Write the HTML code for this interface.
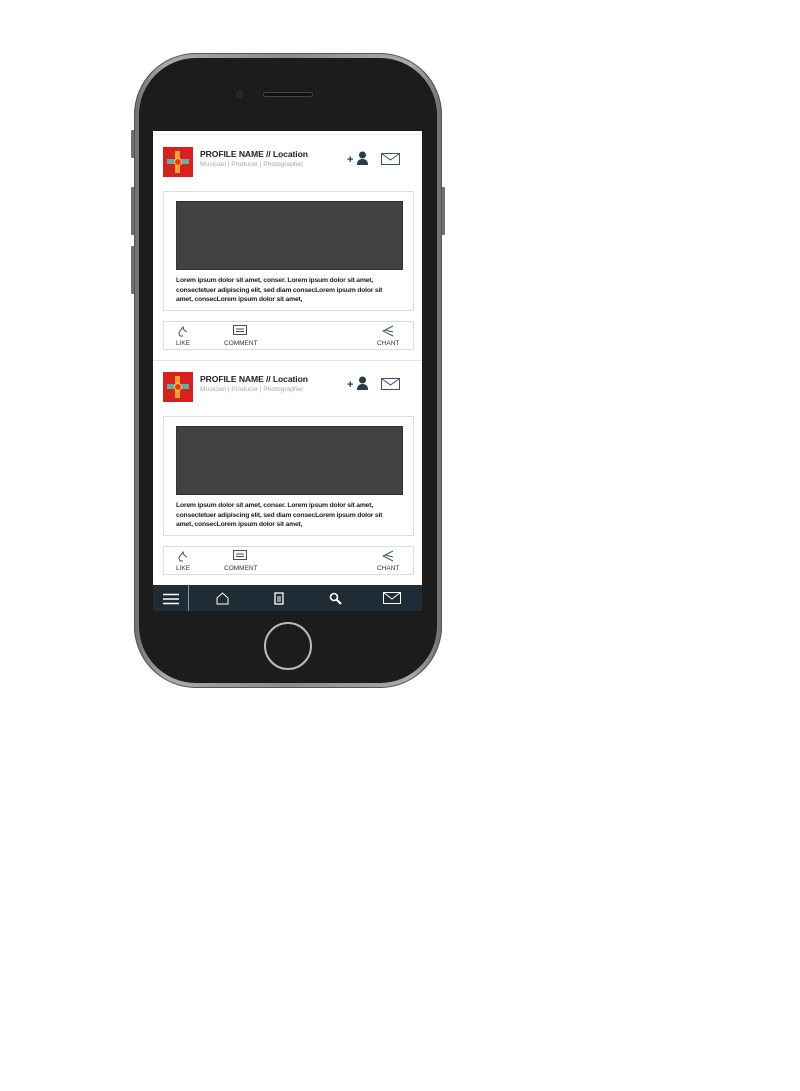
<!DOCTYPE html>
<html><head><style>
*{margin:0;padding:0;box-sizing:border-box}
body{width:800px;height:1091px;background:#fff;position:relative;font-family:"Liberation Sans",sans-serif;overflow:hidden}
.abs{position:absolute}
.phone{left:134px;top:53px;width:308px;height:635px;border-radius:62px;background:linear-gradient(90deg,#6d6e72,#a9aaae 10%,#8a8b8f 50%,#a9aaae 90%,#6d6e72);box-shadow:inset 0 0 0 1px #555}
.inner{left:139px;top:58px;width:298px;height:625px;border-radius:57px;background:#1c1c1c}
.screen{left:153px;top:131px;width:269px;height:480px;background:#fff;overflow:hidden}
.btn{background:#6f7074;width:4px;border-radius:1px}
.post{position:absolute;left:0;width:269px;height:225px}
.av{position:absolute;left:10px;top:16px;width:30px;height:30px;background:#d8201f}
.name{position:absolute;left:47px;top:18px;font-size:8.6px;font-weight:bold;color:#222;letter-spacing:-.1px}
.sub{position:absolute;left:47px;top:30px;font-size:6.8px;color:#aaa;letter-spacing:-.1px}
.card{position:absolute;left:10px;top:60px;width:251px;height:120px;border:1px solid #ddd}
.img{position:absolute;left:12px;top:9px;width:227px;height:69px;background:#424242;border:1px solid #333}
.txt{position:absolute;left:12px;top:84px;white-space:nowrap;font-size:6.8px;line-height:9.5px;color:#222;letter-spacing:-.2px;font-weight:bold;-webkit-text-stroke:0}
.act{position:absolute;left:10px;top:190px;width:251px;height:29px;border:1px solid #ddd;font-size:6.5px;color:#333}
.act span{position:absolute;top:18px}
.nav{position:absolute;left:0;top:454px;width:269px;height:26px;background:#1f2c35}
</style></head><body>
<div class="abs btn" style="left:131px;top:130px;height:28px"></div>
<div class="abs btn" style="left:131px;top:187px;height:48px"></div>
<div class="abs btn" style="left:131px;top:246px;height:48px"></div>
<div class="abs btn" style="left:441px;top:187px;height:48px"></div>
<div class="abs phone"></div>
<div class="abs inner"></div>
<div class="abs" style="left:236px;top:91px;width:7px;height:7px;border-radius:50%;background:#1a2238;border:1px solid #333"></div>
<div class="abs" style="left:263px;top:92px;width:50px;height:5px;border-radius:3px;background:#111;border:1px solid #444"></div>
<div class="abs" style="left:264px;top:622px;width:48px;height:48px;border-radius:50%;border:2px solid #bbb;background:#1c1c1c"></div>
<div class="abs screen">
 <div style="position:absolute;left:0;top:0;width:269px;height:4px;border-bottom:1px solid #eee"></div>
 <div class="post" style="top:0">
  <div class="av"><div style="position:absolute;left:12px;top:4px;width:5px;height:22px;background:#e8a040"></div><div style="position:absolute;left:4px;top:12px;width:22px;height:5px;background:#6aa"></div><div style="position:absolute;left:11px;top:11px;width:8px;height:8px;border-radius:50%;background:#e33;border:1px solid #fc0"></div></div>
  <div class="name">PROFILE NAME // Location</div>
  <div class="sub">Musician | Producer | Photographer</div>
  <div style="position:absolute;left:194px;top:23px;font-size:11px;font-weight:bold;color:#2a3a48">+</div>
  <svg style="position:absolute;left:203px;top:20px" width="13" height="15"><circle cx="6.5" cy="4" r="3.5" fill="#2a3a48"/><path d="M1 14 Q1 8 6.5 8 Q12 8 12 14Z" fill="#2a3a48"/></svg>
  <svg style="position:absolute;left:228px;top:22px" width="20" height="13"><rect x=".5" y=".5" width="18" height="11" fill="none" stroke="#3c5266"/><path d="M.5 .5 L9.5 7 L18.5 .5" fill="none" stroke="#3c5266"/></svg>
  <div class="card"><div class="img"></div><div class="txt">Lorem ipsum dolor sit amet, conser. Lorem ipsum dolor sit amet,<br>consectetuer adipiscing elit, sed diam consecLorem ipsum dolor sit<br>amet, consecLorem ipsum dolor sit amet,</div></div>
  <div class="act">
   <svg style="position:absolute;left:13px;top:2px" width="12" height="14"><path d="M3 12 Q1 9 3 7 L6 3 L7 6 L10 8 M3 12 L6 12" fill="none" stroke="#3c5266"/></svg>
   <svg style="position:absolute;left:69px;top:3px" width="14" height="12"><rect x=".5" y=".5" width="13" height="9" fill="none" stroke="#3c5266"/><path d="M3 4h8M3 6.5h8" stroke="#3c5266"/></svg>
   <svg style="position:absolute;left:218px;top:3px" width="12" height="12"><path d="M11 1 L1 6 L11 11 M3 5 L11 7" fill="none" stroke="#3c5266"/></svg>
   <span style="left:12px">LIKE</span><span style="left:60px">COMMENT</span><span style="left:213px">CHANT</span>
  </div>
  <div style="position:absolute;left:0;top:229px;width:269px;height:1px;background:#e4e4e4"></div>
 </div>
 <div class="post" style="top:225px">
  <div class="av"><div style="position:absolute;left:12px;top:4px;width:5px;height:22px;background:#e8a040"></div><div style="position:absolute;left:4px;top:12px;width:22px;height:5px;background:#6aa"></div><div style="position:absolute;left:11px;top:11px;width:8px;height:8px;border-radius:50%;background:#e33;border:1px solid #fc0"></div></div>
  <div class="name">PROFILE NAME // Location</div>
  <div class="sub">Musician | Producer | Photographer</div>
  <div style="position:absolute;left:194px;top:23px;font-size:11px;font-weight:bold;color:#2a3a48">+</div>
  <svg style="position:absolute;left:203px;top:20px" width="13" height="15"><circle cx="6.5" cy="4" r="3.5" fill="#2a3a48"/><path d="M1 14 Q1 8 6.5 8 Q12 8 12 14Z" fill="#2a3a48"/></svg>
  <svg style="position:absolute;left:228px;top:22px" width="20" height="13"><rect x=".5" y=".5" width="18" height="11" fill="none" stroke="#3c5266"/><path d="M.5 .5 L9.5 7 L18.5 .5" fill="none" stroke="#3c5266"/></svg>
  <div class="card"><div class="img"></div><div class="txt">Lorem ipsum dolor sit amet, conser. Lorem ipsum dolor sit amet,<br>consectetuer adipiscing elit, sed diam consecLorem ipsum dolor sit<br>amet, consecLorem ipsum dolor sit amet,</div></div>
  <div class="act">
   <svg style="position:absolute;left:13px;top:2px" width="12" height="14"><path d="M3 12 Q1 9 3 7 L6 3 L7 6 L10 8 M3 12 L6 12" fill="none" stroke="#3c5266"/></svg>
   <svg style="position:absolute;left:69px;top:3px" width="14" height="12"><rect x=".5" y=".5" width="13" height="9" fill="none" stroke="#3c5266"/><path d="M3 4h8M3 6.5h8" stroke="#3c5266"/></svg>
   <svg style="position:absolute;left:218px;top:3px" width="12" height="12"><path d="M11 1 L1 6 L11 11 M3 5 L11 7" fill="none" stroke="#3c5266"/></svg>
   <span style="left:12px">LIKE</span><span style="left:60px">COMMENT</span><span style="left:213px">CHANT</span>
  </div>
 </div>
 <div class="nav">
  <svg style="position:absolute;left:10px;top:8px" width="16" height="12"><path d="M0 1.5h16M0 6h16M0 10.5h16" stroke="#fff" stroke-width="1.5"/></svg>
  <div style="position:absolute;left:35px;top:0;width:1px;height:26px;background:#8899a4"></div>
  <svg style="position:absolute;left:63px;top:7px" width="13" height="13"><path d="M1 12 V6 L6.5 1 L12 6 V12Z" fill="none" stroke="#fff"/></svg>
  <svg style="position:absolute;left:121px;top:6px" width="10" height="14"><rect x="1" y="2" width="8" height="11" fill="none" stroke="#fff" stroke-width="1.3"/><path d="M3 6h4M3 8h4M3 10h4" stroke="#fff"/></svg>
  <svg style="position:absolute;left:176px;top:7px" width="13" height="13"><circle cx="5" cy="5" r="3.5" fill="none" stroke="#fff" stroke-width="1.6"/><path d="M7.5 7.5 L12 12" stroke="#fff" stroke-width="2"/></svg>
  <svg style="position:absolute;left:230px;top:7px" width="18" height="13"><rect x=".5" y=".5" width="17" height="11" fill="none" stroke="#fff"/><path d="M.5 .5 L9 7 L17.5 .5" fill="none" stroke="#fff"/></svg>
 </div>
</div>
</body></html>
